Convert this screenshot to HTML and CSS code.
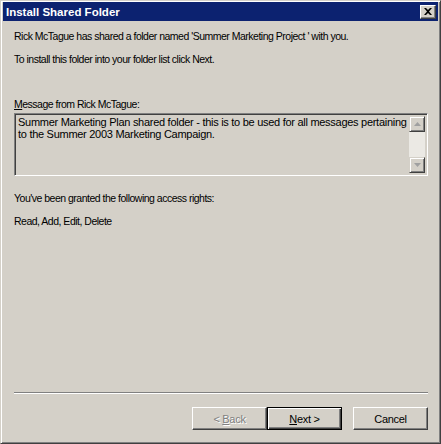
FILE: index.html
```html
<!DOCTYPE html>
<html>
<head>
<meta charset="utf-8">
<link rel="stylesheet" href="styles.css">
</head>
<body>
<div class="window">
  <div class="titlebar">
    <span class="title">Install Shared Folder</span>
    <span class="close">
      <svg width="8" height="7" viewBox="0 0 8 7"><path d="M0 0h2l2 2 2-2h2L5 3.5 8 7H6L4 5 2 7H0l3-3.5z" fill="#000"/></svg>
    </span>
  </div>
  <div class="content">
    <div class="main">
      <p class="line first">Rick McTague has shared a folder named 'Summer Marketing Project ' with you.</p>
      <p class="line second">To install this folder into your folder list click Next.</p>
      <p class="line label"><u>M</u>essage from Rick McTague:</p>
      <div class="textbox">
        <div class="msg">Summer Marketing Plan shared folder - this is to be used for all messages pertaining to the Summer 2003 Marketing Campaign.</div>
        <div class="scrollbar">
          <span class="sbtn"><svg width="7" height="4" viewBox="0 0 7 4"><path d="M3.5 0L7 4H0z" fill="#a0a0a0"/></svg></span>
          <span class="track"></span>
          <span class="sbtn"><svg width="7" height="4" viewBox="0 0 7 4"><path d="M0 0h7L3.5 4z" fill="#a0a0a0"/></svg></span>
        </div>
      </div>
      <p class="line granted">You've been granted the following access rights:</p>
      <p class="line rights">Read, Add, Edit, Delete</p>
    </div>
    <div class="separator"></div>
    <div class="buttons">
      <button class="btn disabled">&lt; <u>B</u>ack</button>
      <button class="btn default"><u>N</u>ext &gt;</button>
      <button class="btn cancel">Cancel</button>
    </div>
  </div>
</div>
</body>
</html>
```
FILE: styles.css
```css
html, body {
  margin: 0;
  padding: 0;
  background: #d4d0c8;
}
body {
  font-family: "Liberation Sans", Arial, sans-serif;
  font-size: 10.5px;
  letter-spacing: -0.5px;
  color: #000;
}
.window {
  width: 441px;
  height: 444px;
  box-sizing: border-box;
  background: #d4d0c8;
  border-top: 1px solid #d4d0c8;
  border-left: 1px solid #d4d0c8;
  border-right: 1px solid #404040;
  border-bottom: 1px solid #404040;
  box-shadow: inset 1px 1px 0 #fff, inset -1px -1px 0 #808080;
  padding: 1px 2px 2px 2px;
  display: flex;
  flex-direction: column;
}
.titlebar {
  height: 19px;
  background: #0c2270;
  display: flex;
  align-items: center;
  justify-content: space-between;
  padding: 0 2px 0 3px;
  flex: none;
}
.title {
  color: #fff;
  font-weight: bold;
  font-size: 11.5px;
  letter-spacing: 0;
}
.close {
  width: 16px;
  height: 14px;
  box-sizing: border-box;
  background: #d4d0c8;
  border-top: 1px solid #fff;
  border-left: 1px solid #fff;
  border-right: 1px solid #404040;
  border-bottom: 1px solid #404040;
  box-shadow: inset -1px -1px 0 #808080;
  display: flex;
  align-items: center;
  justify-content: center;
  padding-bottom: 1px;
}
.content {
  flex: 1;
  display: flex;
  flex-direction: column;
  padding: 0 10px 0 11px;
}
.main {
  flex: 1;
}
.line {
  margin: 0;
  line-height: 13px;
  height: 13px;
  white-space: nowrap;
}
.first { margin-top: 9px; }
.second { margin-top: 10px; }
.label { margin-top: 32px; }
.granted { margin-top: 16px; }
.rights { margin-top: 10px; }
.textbox {
  margin-top: 2px;
  height: 63px;
  box-sizing: border-box;
  border-top: 1px solid #808080;
  border-left: 1px solid #808080;
  border-right: 1px solid #fff;
  border-bottom: 1px solid #fff;
  box-shadow: inset 1px 1px 0 #404040, inset -1px -1px 0 #d4d0c8;
  padding: 2px 2px 2px 2px;
  display: flex;
  background: #d4d0c8;
}
.msg {
  flex: 1;
  padding: 0 0 0 1px;
  line-height: 12px;
  font-size: 11px;
  letter-spacing: -0.28px;
}
.scrollbar {
  width: 16px;
  display: flex;
  flex-direction: column;
  flex: none;
}
.sbtn {
  height: 16px;
  box-sizing: border-box;
  background: #d4d0c8;
  border-top: 1px solid #d4d0c8;
  border-left: 1px solid #d4d0c8;
  border-right: 1px solid #404040;
  border-bottom: 1px solid #404040;
  box-shadow: inset 1px 1px 0 #fff, inset -1px -1px 0 #808080;
  display: flex;
  align-items: center;
  justify-content: center;
  flex: none;
}
.track {
  flex: 1;
  background: #ebe9e4;
}
.separator {
  border-top: 1px solid #808080;
  border-bottom: 1px solid #fff;
  height: 0;
  margin: 0 0 13px 0;
}
.buttons {
  display: flex;
  justify-content: flex-end;
  margin-bottom: 11px;
}
.btn {
  width: 75px;
  height: 23px;
  box-sizing: border-box;
  font-family: "Liberation Sans", Arial, sans-serif;
  font-size: 11px;
  letter-spacing: -0.3px;
  color: #000;
  background: #d4d0c8;
  border-top: 1px solid #fff;
  border-left: 1px solid #fff;
  border-right: 1px solid #404040;
  border-bottom: 1px solid #404040;
  box-shadow: inset -1px -1px 0 #808080;
  padding: 0;
  margin: 0;
}
.btn.disabled {
  color: #808080;
  text-shadow: 1px 1px 0 #fff;
}
.btn.default {
  border: 1px solid #000;
  box-shadow: inset 1px 1px 0 #fff, inset -1px -1px 0 #404040, inset -2px -2px 0 #808080;
}
.btn.cancel {
  margin-left: 11px;
}
```
